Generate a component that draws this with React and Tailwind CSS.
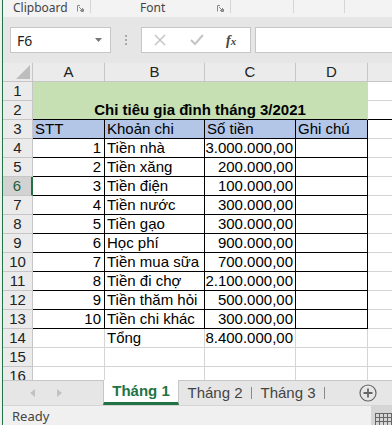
import React from "react";

const GRID = "border-[#d4d4d4]";

const rows = [
  { n: 3, a: "STT", b: "Khoản chi", c: "Số tiền", d: "Ghi chú", head: true },
  { n: 4, a: "1", b: "Tiền nhà", c: "3.000.000,00" },
  { n: 5, a: "2", b: "Tiền xăng", c: "200.000,00" },
  { n: 6, a: "3", b: "Tiền điện", c: "100.000,00" },
  { n: 7, a: "4", b: "Tiền nước", c: "300.000,00" },
  { n: 8, a: "5", b: "Tiền gạo", c: "300.000,00" },
  { n: 9, a: "6", b: "Học phí", c: "900.000,00" },
  { n: 10, a: "7", b: "Tiền mua sữa", c: "700.000,00" },
  { n: 11, a: "8", b: "Tiền đi chợ", c: "2.100.000,00" },
  { n: 12, a: "9", b: "Tiền thăm hỏi", c: "500.000,00" },
  { n: 13, a: "10", b: "Tiền chi khác", c: "300.000,00" },
];

const Launcher = () => (
  <svg width="7" height="7" viewBox="0 0 7 7" className="shrink-0">
    <path d="M0.5 6.5V0.5H3M6.5 4V6.5H4" stroke="#8a8a8a" fill="none" />
    <path d="M2 2L5.5 5.5M5.5 3V5.5H3" stroke="#8a8a8a" fill="none" />
  </svg>
);

const RowHead = ({ n, active }) =>
  active ? (
    <div className="w-[30px] h-full shrink-0 flex items-end justify-center bg-[#d2d2d2] border-b border-[#c6c6c6] border-r-2 border-r-[#217346] text-[#1e5e3a] leading-[18px]">
      {n}
    </div>
  ) : (
    <div className="w-[30px] h-full shrink-0 flex items-end justify-center bg-[#ebebeb] border-b border-r border-[#c6c6c6] text-[#222] leading-[18px]">
      {n}
    </div>
  );

const TableRow = ({ r }) => {
  const fill = r.head ? "bg-[#b4c6e7]" : "bg-white";
  const cell = `h-full shrink-0 border-r border-b border-black flex items-end leading-[18px] overflow-hidden whitespace-nowrap ${fill}`;
  return (
    <div className="flex h-[19px]">
      <RowHead n={r.n} active={r.n === 6} />
      <div className={`w-[72px] ${cell} ${r.head ? "justify-start pl-[2px]" : "justify-end pr-[3px]"}`}>
        {r.a}
      </div>
      <div className={`w-[100px] ${cell} pl-[2px]`}>{r.b}</div>
      <div className={`w-[91px] ${cell} ${r.head ? "justify-start pl-[2px]" : "justify-end pr-[2px]"}`}>
        {r.c}
      </div>
      <div className={`w-[72px] ${cell} pl-[2px]`}>{r.d || ""}</div>
      <div className={`flex-1 h-full border-b ${GRID} bg-white`} />
    </div>
  );
};

const PlainRow = ({ n, b, c }) => (
  <div className="flex h-[19px]">
    <RowHead n={n} />
    <div className={`w-[72px] h-full shrink-0 border-r border-b ${GRID} bg-white`} />
    <div className={`w-[100px] h-full shrink-0 border-r border-b ${GRID} bg-white flex items-end leading-[18px] pl-[2px]`}>
      {b}
    </div>
    <div className={`w-[91px] h-full shrink-0 border-r border-b ${GRID} bg-white flex items-end justify-end leading-[18px] pr-[2px]`}>
      {c}
    </div>
    <div className={`w-[72px] h-full shrink-0 border-r border-b ${GRID} bg-white`} />
    <div className={`flex-1 h-full border-b ${GRID} bg-white`} />
  </div>
);

const App = () => {
  return (
    <div
      className="w-[392px] h-[425px] overflow-hidden flex bg-[#e6e6e6] text-[15px]"
      style={{ fontFamily: '"Liberation Sans", Arial, sans-serif' }}
    >
      <div className="w-[2px] shrink-0 bg-[#f0f0f0]" />
      <div className="w-px shrink-0 bg-[#217346]" />
      <div className="flex-1 flex flex-col min-w-0">
        {/* ribbon group labels */}
        <div
          className="h-[17px] shrink-0 flex bg-[#f3f3f3] text-[12px] text-[#444] leading-[15px]"
          style={{ fontFamily: '"Noto Sans", "Open Sans", sans-serif' }}
        >
          <div className="w-[87px] flex items-start pl-[10px] pr-[6px]">
            <span>Clipboard</span>
            <span className="mt-[5px] ml-auto"><Launcher /></span>
          </div>
          <div className="w-px h-[13px] bg-[#d5d5d5]" />
          <div className="w-[139px] flex items-start pl-[49px] pr-[6px]">
            <span>Font</span>
            <span className="mt-[5px] ml-auto"><Launcher /></span>
          </div>
          <div className="w-px h-[13px] bg-[#d5d5d5]" />
          <div className="w-[62px]" />
          <div className="w-px h-[13px] bg-[#d5d5d5]" />
          <div className="w-[50px]" />
          <div className="w-px h-[13px] bg-[#d5d5d5]" />
        </div>

        {/* formula bar */}
        <div className="h-[46px] shrink-0 flex items-start pt-[10px] pl-[7px]">
          <div
            className="w-[101px] h-[26px] bg-white border border-[#c6c6c6] flex items-center justify-between pl-[6px] pr-[8px] text-[14px] text-[#222]"
            style={{ fontFamily: '"Noto Sans", "Open Sans", sans-serif' }}
          >
            <span>F6</span>
            <svg width="7" height="4" viewBox="0 0 7 4">
              <path d="M0 0H7L3.5 4Z" fill="#777" />
            </svg>
          </div>
          <div className="w-[30px] h-[26px] flex flex-col items-center justify-center gap-[2px]">
            <div className="w-[2px] h-[2px] bg-[#a8a8a8]" />
            <div className="w-[2px] h-[2px] bg-[#a8a8a8]" />
            <div className="w-[2px] h-[2px] bg-[#a8a8a8]" />
          </div>
          <div className="w-[110px] h-[26px] bg-white border border-[#c6c6c6] flex items-center pl-[12px]">
            <svg width="12" height="12" viewBox="0 0 12 12">
              <path d="M1 1L11 11M11 1L1 11" stroke="#c4c4c4" strokeWidth="1.5" />
            </svg>
            <svg width="14" height="12" viewBox="0 0 14 12" className="ml-[24px]">
              <path d="M1 6L5 10L13 1" stroke="#c4c4c4" strokeWidth="2" fill="none" />
            </svg>
            <span
              className="ml-[22px] text-[14px] italic text-[#444] font-bold"
              style={{ fontFamily: '"Liberation Serif", serif' }}
            >
              f<span className="text-[11px]">x</span>
            </span>
          </div>
          <div className="flex-1 h-[26px] ml-[4px] bg-white border border-[#c6c6c6] border-r-0" />
        </div>

        {/* sheet grid */}
        <div className="h-[317px] shrink-0 overflow-hidden flex flex-col">
          {/* column headers */}
          <div className="flex h-[19px] shrink-0 text-[#222]">
            <div className="w-[30px] h-full shrink-0 bg-[#ebebeb] border-r border-b border-[#c6c6c6] flex items-end justify-end p-[2px]">
              <svg width="14" height="14" viewBox="0 0 14 14">
                <path d="M14 0V14H0Z" fill="#bdbdbd" />
              </svg>
            </div>
            {[
              ["A", "w-[72px]"],
              ["B", "w-[100px]"],
              ["C", "w-[91px]"],
              ["D", "w-[72px]"],
            ].map(([l, w]) => (
              <div
                key={l}
                className={`${w} h-full shrink-0 bg-[#ebebeb] border-r border-b border-[#c6c6c6] flex items-end justify-center leading-[18px]`}
              >
                {l}
              </div>
            ))}
            <div className="flex-1 h-full bg-[#ebebeb] border-b border-[#c6c6c6]" />
          </div>

          {/* rows 1-2 merged title */}
          <div className="flex h-[38px] shrink-0">
            <div className="w-[30px] shrink-0 flex flex-col">
              <div className="h-[19px]"><RowHead n={1} /></div>
              <div className="h-[19px]"><RowHead n={2} /></div>
            </div>
            <div className={`w-[335px] shrink-0 bg-[#c6e0b4] border-r ${GRID} border-b border-b-black flex items-end justify-center font-bold leading-[18px]`}>
              Chi tiêu gia đình tháng 3/2021
            </div>
            <div className="flex-1 flex flex-col bg-white">
              <div className={`h-[19px] border-b ${GRID}`} />
              <div className="h-[19px] border-b border-black" />
            </div>
          </div>

          {rows.map((r) => (
            <TableRow key={r.n} r={r} />
          ))}
          <PlainRow n={14} b="Tổng" c="8.400.000,00" />
          <PlainRow n={15} />
          <PlainRow n={16} />
        </div>

        {/* sheet tabs */}
        <div className="h-[25px] shrink-0 flex items-stretch border-t border-[#c6c6c6] bg-[#e6e6e6]">
          <div className="w-[100px] flex items-center pl-[27px] gap-[22px]">
            <svg width="5" height="8" viewBox="0 0 5 8">
              <path d="M5 0V8L0 4Z" fill="#c2c2c2" />
            </svg>
            <svg width="5" height="8" viewBox="0 0 5 8">
              <path d="M0 0V8L5 4Z" fill="#c2c2c2" />
            </svg>
          </div>
          <div className="w-[76px] -mt-px bg-white border-x border-[#c6c6c6] border-b-[3px] border-b-[#217346] flex items-center justify-center font-bold text-[#217346]">
            Tháng 1
          </div>
          <div className="w-[73px] flex items-center justify-center text-[#444] border-r border-[#8a8a8a] my-[6px]">
            Tháng 2
          </div>
          <div className="w-[73px] flex items-center justify-center text-[#444] border-r border-[#8a8a8a] my-[6px]">
            Tháng 3
          </div>
          <div className="flex-1 flex items-center justify-end pr-[15px]">
            <svg width="18" height="18" viewBox="0 0 18 18">
              <circle cx="9" cy="9" r="8" stroke="#666" strokeWidth="1.2" fill="none" />
              <path d="M9 4.5V13.5M4.5 9H13.5" stroke="#666" strokeWidth="1.8" />
            </svg>
          </div>
        </div>

        {/* status bar */}
        <div
          className="flex-1 flex items-end border-t border-[#d5d5d5] bg-[#f0f0f0] text-[13px] text-[#444]"
          style={{ fontFamily: '"Noto Sans", "Open Sans", sans-serif' }}
        >
          <div className="flex-1 pl-[9px] pb-[1px] leading-[18px]">Ready</div>
          <div className="w-[21px] h-full bg-[#d5d5d5] flex items-end justify-end pt-[6px]">
            <svg width="17" height="14" viewBox="0 0 17 14">
              <path
                d="M0.5 1V14M4.5 1V14M8.5 1V14M12.5 1V14M16.5 1V14M0 1.5H17M0 5.5H17M0 9.5H17M0 13.5H17"
                stroke="#666"
                strokeWidth="1"
              />
            </svg>
          </div>
        </div>
      </div>
    </div>
  );
};

export default App;
